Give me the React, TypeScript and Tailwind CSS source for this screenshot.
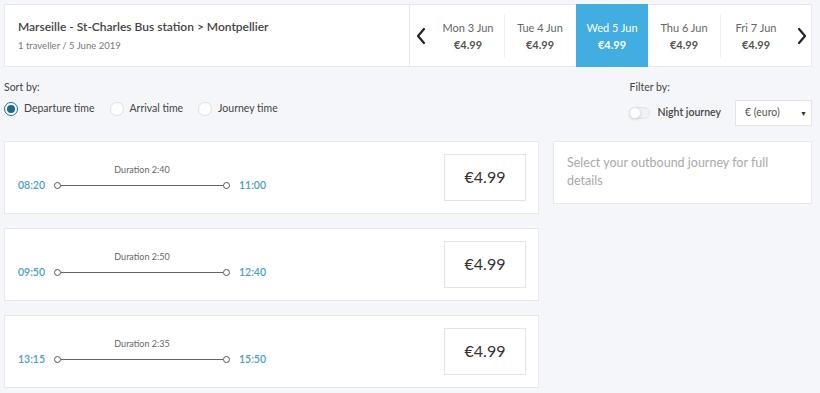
import React, { useState } from "react";

const days = [
  { label: "Mon 3 Jun", price: "€4.99" },
  { label: "Tue 4 Jun", price: "€4.99" },
  { label: "Wed 5 Jun", price: "€4.99" },
  { label: "Thu 6 Jun", price: "€4.99" },
  { label: "Fri 7 Jun", price: "€4.99" },
];

const journeys = [
  { dep: "08:20", arr: "11:00", duration: "2:40", price: "€4.99" },
  { dep: "09:50", arr: "12:40", duration: "2:50", price: "€4.99" },
  { dep: "13:15", arr: "15:50", duration: "2:35", price: "€4.99" },
];

const sortOptions = ["Departure time", "Arrival time", "Journey time"];

const Chevron = ({ dir }: { dir: "left" | "right" }) => (
  <svg width="12" height="18" viewBox="0 0 12 18" fill="none">
    <path
      d={dir === "left" ? "M9 2 L3 9 L9 16" : "M3 2 L9 9 L3 16"}
      stroke="#222"
      strokeWidth="2.2"
      strokeLinecap="round"
      strokeLinejoin="round"
    />
  </svg>
);

const App: React.FC = () => {
  const [selectedDay, setSelectedDay] = useState(2);
  const [sortBy, setSortBy] = useState(0);
  const [night, setNight] = useState(false);

  return (
    <div
      className="min-h-[393px] w-[820px] bg-[#f5f6f9] pl-[4px] pr-[8px] pt-[4px] text-[#4a4a4a]"
      style={{ fontFamily: "Lato, 'Noto Sans', sans-serif" }}
    >
      {/* Header */}
      <div className="flex h-[63px] border border-[#e6e8ee] bg-white">
        <div className="flex w-[405px] flex-col justify-center border-r border-[#e6e8ee] pl-[13px]">
          <div className="text-[12px] font-semibold text-[#444]">
            Marseille - St-Charles Bus station &gt; Montpellier
          </div>
          <div className="mt-[3px] text-[9.5px] text-[#777]">1 traveller / 5 June 2019</div>
        </div>
        <div className="flex flex-1 items-stretch">
          <button className="flex w-[22px] items-center justify-center">
            <Chevron dir="left" />
          </button>
          {days.map((d, i) => {
            const active = i === selectedDay;
            return (
              <button
                key={d.label}
                onClick={() => setSelectedDay(i)}
                className={`relative -my-px flex w-[72px] flex-col items-center justify-center pt-[2px] ${
                  active ? "bg-[#42ade0] text-white" : "text-[#555]"
                }`}
              >
                {i > 0 && !active && i !== selectedDay + 1 && (
                  <span className="absolute left-0 top-[10px] h-[44px] w-px bg-[#f0f1f4]" />
                )}
                <span className={`text-[11px] leading-[16px] ${active ? "text-white" : "text-[#666]"}`}>
                  {d.label}
                </span>
                <span
                  className={`mt-[1px] text-[11px] font-bold leading-[16px] ${
                    active ? "text-white" : "text-[#555]"
                  }`}
                >
                  {d.price}
                </span>
              </button>
            );
          })}
          <button className="flex flex-1 items-center justify-center">
            <Chevron dir="right" />
          </button>
        </div>
      </div>

      {/* Sort / filter bar */}
      <div className="mt-[13px] flex items-start justify-between">
        <div>
          <div className="text-[10.5px] text-[#444]">Sort by:</div>
          <div className="mt-[5px] flex items-center">
            {sortOptions.map((o, i) => (
              <label
                key={o}
                onClick={() => setSortBy(i)}
                className="mr-[15px] flex cursor-pointer items-center"
              >
                <span
                  className={`flex h-[14px] w-[14px] items-center justify-center rounded-full border bg-white ${
                    sortBy === i ? "border-[1.5px] border-[#1d6a8e]" : "border-[#dcdfe5]"
                  }`}
                >
                  {sortBy === i && <span className="h-[8px] w-[8px] rounded-full bg-[#1d6a8e]" />}
                </span>
                <span className="ml-[6px] text-[10.5px] text-[#444]">{o}</span>
              </label>
            ))}
          </div>
        </div>
        <div className="flex flex-col">
          <div className="text-[10.5px] text-[#444]">Filter by:</div>
          <div className="mt-[4px] flex items-center">
            <button
              onClick={() => setNight(!night)}
              className={`relative h-[12px] w-[21px] rounded-full border border-[#e2e4e9] ${
                night ? "bg-[#42ade0]" : "bg-[#f0f1f4]"
              }`}
            >
              <span
                className={`absolute top-[-1px] h-[12px] w-[12px] rounded-full border border-[#e2e4e9] bg-white shadow-sm ${
                  night ? "left-[8px]" : "left-[-1px]"
                }`}
              />
            </button>
            <span className="ml-[7px] text-[10.5px] font-semibold text-[#444]">Night journey</span>
            <div className="ml-[14px] flex h-[26px] w-[77px] items-center justify-between border border-[#e2e4e9] bg-white pl-[9px] pr-[4px]">
              <span className="text-[10.5px] text-[#555]">€ (euro)</span>
              <span className="text-[7px] text-[#333]">▼</span>
            </div>
          </div>
        </div>
      </div>

      {/* Results */}
      <div className="mt-[15px] flex items-start">
        <div className="flex w-[535px] flex-col gap-[14px]">
          {journeys.map((j) => (
            <div
              key={j.dep}
              className="flex h-[73px] items-center justify-between border border-[#e6e8ee] bg-white pl-[13px] pr-[12px]"
            >
              <div className="flex w-[248px] items-end pt-[17px]">
                <span className="text-[10.5px] font-semibold text-[#4aa0c4]">{j.dep}</span>
                <div className="relative mx-[9px] mb-[5px] flex flex-1 items-center">
                  <span className="absolute -top-[19px] left-0 right-0 text-center text-[9px] text-[#666]">
                    Duration {j.duration}
                  </span>
                  <span className="h-[7px] w-[7px] shrink-0 rounded-full border border-[#555] bg-white" />
                  <span className="h-px flex-1 bg-[#666]" />
                  <span className="h-[7px] w-[7px] shrink-0 rounded-full border border-[#555] bg-white" />
                </div>
                <span className="text-[10.5px] font-semibold text-[#4aa0c4]">{j.arr}</span>
              </div>
              <div className="flex h-[47px] w-[82px] items-center justify-center border border-[#e2e4e9] bg-white text-[16px] text-[#333]">
                {j.price}
              </div>
            </div>
          ))}
        </div>
        <div className="ml-[14px] flex h-[63px] flex-1 border border-[#e6e8ee] bg-white px-[13px] pt-[12px]">
          <p className="text-[12.5px] leading-[18px] text-[#aaa]">
            Select your outbound journey for full details
          </p>
        </div>
      </div>
    </div>
  );
};

export default App;
